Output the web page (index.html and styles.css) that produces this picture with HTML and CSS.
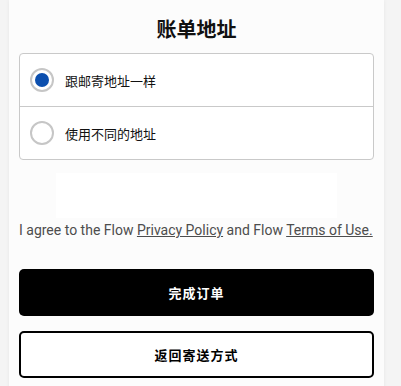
FILE: index.html
```html
<!DOCTYPE html>
<html lang="zh-CN">
<head>
    <meta charset="UTF-8">
    <meta name="viewport" content="width=device-width, initial-scale=1.0">
    <title>账单地址</title>
    <link rel="stylesheet" href="styles.css">
</head>
<body>
    <div class="card">
        <h2>账单地址</h2>

        <div class="address-options">
            <label class="option">
                <input type="radio" name="billing" checked>
                <span class="radio"></span>
                <span>跟邮寄地址一样</span>
            </label>
            <label class="option">
                <input type="radio" name="billing">
                <span class="radio"></span>
                <span>使用不同的地址</span>
            </label>
        </div>

        <div class="payment-frame"></div>

        <p class="terms">I agree to the Flow <a href="#">Privacy Policy</a> and Flow <a href="#">Terms of Use.</a></p>

        <button class="btn btn-primary">完成订单</button>
        <button class="btn btn-secondary">返回寄送方式</button>
    </div>
</body>
</html>
```

FILE: styles.css
```css
* { margin: 0; padding: 0; box-sizing: border-box; }
body {
    font-family: Roboto, "Noto Sans CJK SC", sans-serif;
    background: #f4f4f4;
    color: #111;
    padding: 0 17px 0 9px;
}
.card {
    background: #fcfcfc;
    padding: 16px 10px 20px;
    box-shadow: 0 0 4px rgba(0,0,0,0.06);
    min-height: 400px;
}
h2 {
    font-size: 20px; line-height: 28px; font-weight: 700; text-align: center; margin-bottom: 9px;
}
.address-options {
    border: 1px solid #c9c9c9; border-radius: 4px; background: #fff;
}
.option {
    display: flex; align-items: center; gap: 11px; height: 52px; padding: 0 10px; font-size: 13px; cursor: pointer;
}
.option + .option { border-top: 1px solid #c9c9c9; height: 53px; }
.option input { display: none; }
.radio {
    width: 24px; height: 24px; border: 2px solid #c6c6c6; border-radius: 50%; display: flex; align-items: center; justify-content: center;
}
.option input:checked + .radio::after {
    content: ''; width: 14px; height: 14px; border-radius: 50%; background: #0c4fae;
}
.payment-frame {
    width: 281px; height: 45px; margin: 13px auto 2px; background: #fff;
}
.terms {
    font-size: 14px; line-height: 20px; color: #4d4d4d; white-space: nowrap;
}
.terms a { color: #4d4d4d; }
.btn {
    display: block; width: 100%; height: 47px; border-radius: 5px; font-family: inherit; font-size: 13px; font-weight: 700; letter-spacing: 1px; cursor: pointer;
}
.btn-primary { background: #000; color: #fff; border: none; margin-top: 29px; }
.btn-secondary { background: #fff; color: #000; border: 2px solid #000; margin-top: 15px; }
```
